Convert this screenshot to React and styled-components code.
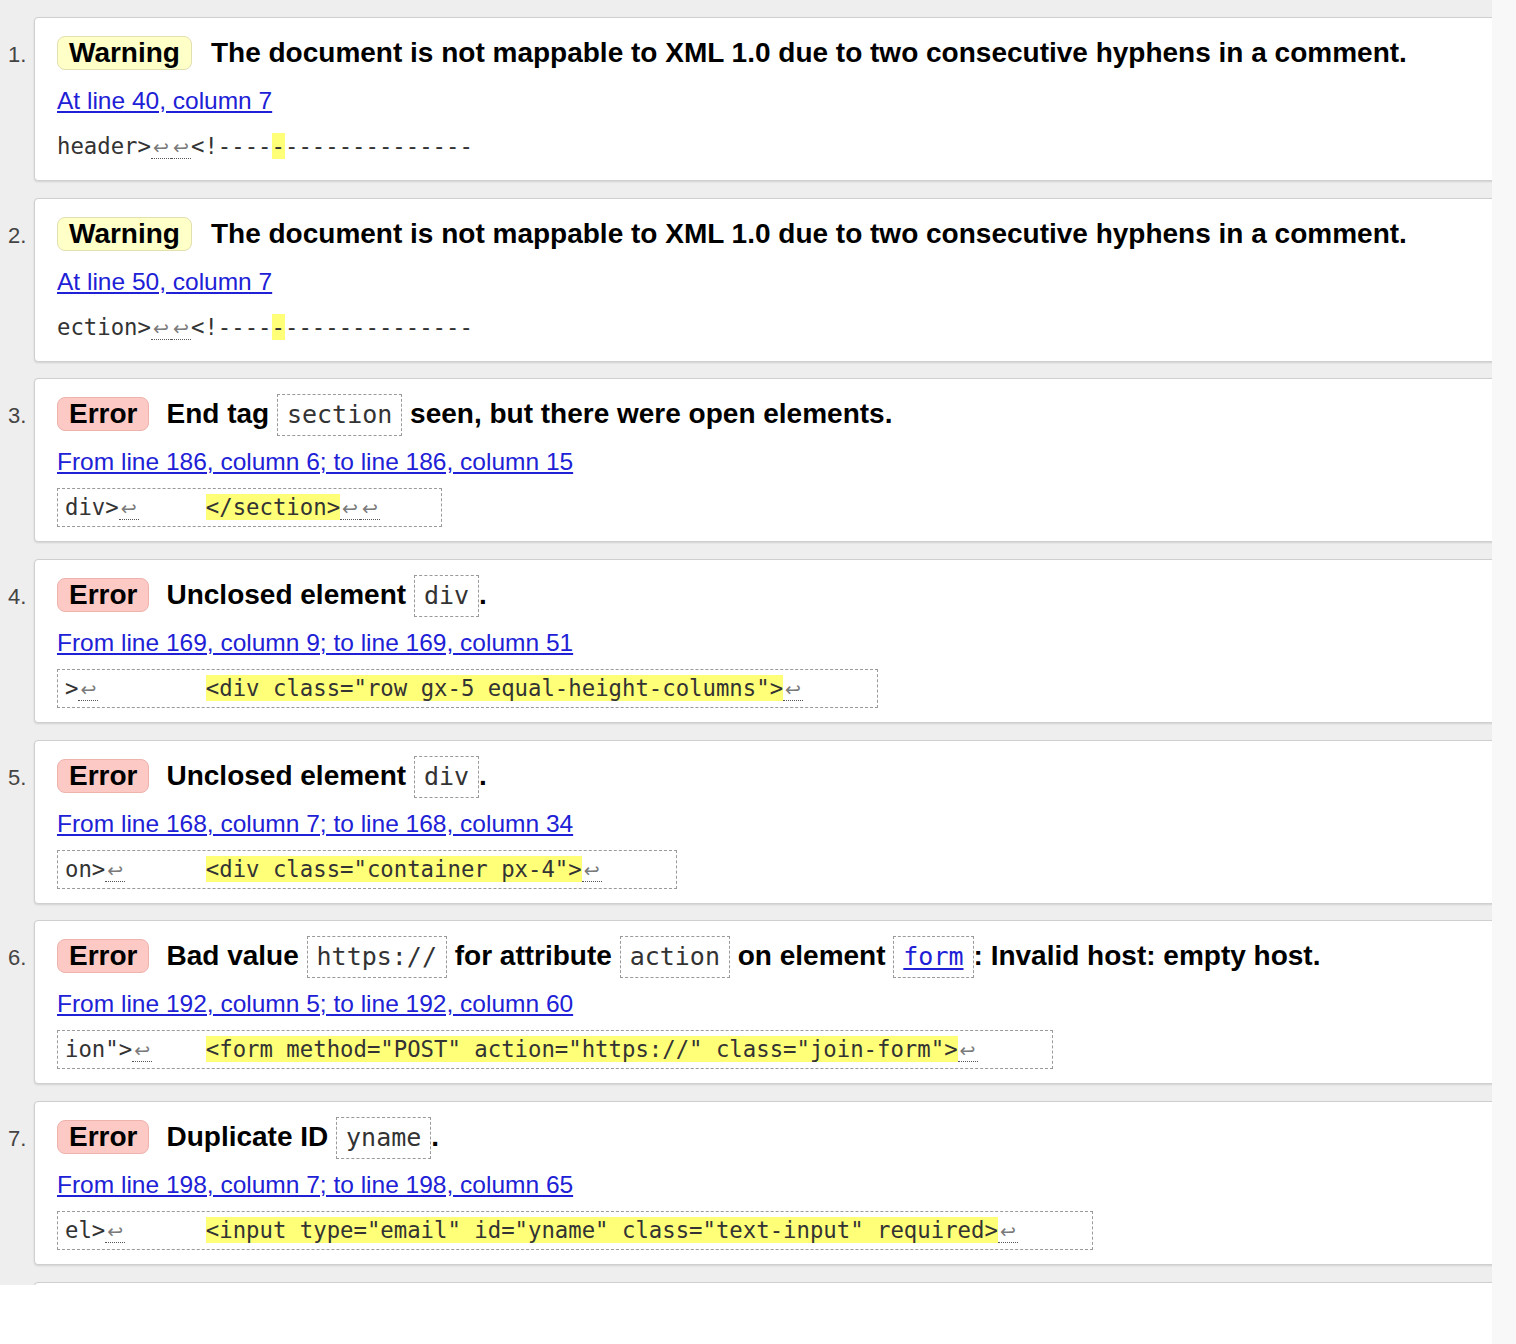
import React from "react";
import styled, { createGlobalStyle } from "styled-components";

const GlobalStyle = createGlobalStyle`
  html, body {
    margin: 0;
    padding: 0;
    background: #ffffff;
  }
  body {
    font-family: "Liberation Sans", Arial, sans-serif;
  }
`;

const MONO = `"DejaVu Sans Mono", "Liberation Mono", monospace`;
const LINK = "#2020d6";

const Page = styled.div`
  display: flex;
  width: 1516px;
  height: 1344px;
`;

const Viewport = styled.div`
  flex: none;
  width: 1492px;
  height: 1285px;
  overflow: hidden;
  background: #eeeeee;
`;

const Gutter = styled.div`
  flex: none;
  width: 24px;
  height: 1344px;
  background: #f8f8f8;
`;

const List = styled.ol`
  margin: 0;
  padding: 17px 0 0 8px;
  list-style: none;
  width: 1540px;
  display: flex;
  flex-direction: column;
  gap: 16.67px;
`;

const Item = styled.li`
  display: flex;
  align-items: baseline;
`;

const Num = styled.span`
  flex: none;
  width: 26px;
  font-size: 22px;
  color: #444;
`;

const Card = styled.div`
  flex: 1;
  box-sizing: border-box;
  height: 164px;
  padding: 14px 22px 14px;
  background: #ffffff;
  border: 1px solid #cfcfcf;
  border-radius: 4px;
  box-shadow: 0 1px 2px rgba(0, 0, 0, 0.12);
`;

const Title = styled.p`
  margin: 0;
  height: 42px;
  line-height: 42px;
  font-size: 28px;
  font-weight: bold;
  color: #000;
  white-space: nowrap;
`;

const Badge = styled.strong`
  display: inline-block;
  line-height: 32px;
  padding: 0 11px;
  margin-right: ${(p) => (p.$kind === "warning" ? "19px" : "17px")};
  border-radius: 8px;
  border: 1px solid
    ${(p) => (p.$kind === "warning" ? "#e2dfb0" : "#efb3ae")};
  background: ${(p) => (p.$kind === "warning" ? "#ffffc8" : "#fcc9c5")};
`;

const Code = styled.code`
  display: inline-block;
  line-height: 40px;
  padding: 0 9px;
  border: 1px dashed #9a9a9a;
  font-family: ${MONO};
  font-size: 25px;
  font-weight: normal;
  color: ${(p) => (p.$link ? LINK : "#333")};
  text-decoration: ${(p) => (p.$link ? "underline" : "none")};
  text-underline-offset: 3px;
`;

const Location = styled.p`
  margin: 12px 0 0;
  line-height: 29px;
  font-size: 24.5px;
`;

const Link = styled.a`
  color: ${LINK};
  text-decoration: underline;
  text-underline-offset: 2px;
`;

const Extract = styled.pre`
  display: block;
  width: fit-content;
  margin: 12px 0 0;
  padding: ${(p) => (p.$boxed ? "0 7px" : "0")};
  border: ${(p) => (p.$boxed ? "1px dashed #9a9a9a" : "none")};
  line-height: ${(p) => (p.$boxed ? "37px" : "39px")};
  font-family: ${MONO};
  font-size: 22.3px;
  color: #333;
  white-space: pre;
`;

const Mark = styled.mark`
  background: #ffff78;
  color: #333;
`;

const Lf = styled.span`
  display: inline-block;
  width: 20px;
  line-height: 22px;
  text-align: center;
  font-family: "DejaVu Sans", sans-serif;
  font-size: 19px;
  color: #7a7a7a;
  border-bottom: 1px dotted #555;
`;

const withBreaks = (s) =>
  s.split("↩").flatMap((part, i) =>
    i === 0 ? [part] : [<Lf key={i}>↩</Lf>, part]
  );

const messages = [
  {
    kind: "warning",
    title: (
      <>
        The document is not mappable to XML 1.0 due to two consecutive hyphens
        in a comment.
      </>
    ),
    loc: "At line 40, column 7",
    boxed: false,
    pre: "header>↩↩<!----",
    mark: "-",
    post: "--------------",
  },
  {
    kind: "warning",
    title: (
      <>
        The document is not mappable to XML 1.0 due to two consecutive hyphens
        in a comment.
      </>
    ),
    loc: "At line 50, column 7",
    boxed: false,
    pre: "ection>↩↩<!----",
    mark: "-",
    post: "--------------",
  },
  {
    kind: "error",
    title: (
      <>
        End tag <Code>section</Code> seen, but there were open elements.
      </>
    ),
    loc: "From line 186, column 6; to line 186, column 15",
    boxed: true,
    pre: "div>↩     ",
    mark: "</section>",
    post: "↩↩    ",
  },
  {
    kind: "error",
    title: (
      <>
        Unclosed element <Code>div</Code>.
      </>
    ),
    loc: "From line 169, column 9; to line 169, column 51",
    boxed: true,
    pre: ">↩        ",
    mark: '<div class="row gx-5 equal-height-columns">',
    post: "↩     ",
  },
  {
    kind: "error",
    title: (
      <>
        Unclosed element <Code>div</Code>.
      </>
    ),
    loc: "From line 168, column 7; to line 168, column 34",
    boxed: true,
    pre: "on>↩      ",
    mark: '<div class="container px-4">',
    post: "↩     ",
  },
  {
    kind: "error",
    title: (
      <>
        Bad value <Code>https://</Code> for attribute <Code>action</Code> on
        element{" "}
        <Code as="a" $link>
          form
        </Code>
        : Invalid host: empty host.
      </>
    ),
    loc: "From line 192, column 5; to line 192, column 60",
    boxed: true,
    pre: 'ion">↩    ',
    mark: '<form method="POST" action="https://" class="join-form">',
    post: "↩     ",
  },
  {
    kind: "error",
    title: (
      <>
        Duplicate ID <Code>yname</Code>.
      </>
    ),
    loc: "From line 198, column 7; to line 198, column 65",
    boxed: true,
    pre: "el>↩      ",
    mark: '<input type="email" id="yname" class="text-input" required>',
    post: "↩     ",
  },
];

export default function App() {
  return (
    <>
      <GlobalStyle />
      <Page>
        <Viewport>
          <List>
            {messages.map((m, i) => (
              <Item key={i}>
                <Num>{i + 1}.</Num>
                <Card>
                  <Title>
                    <Badge $kind={m.kind}>
                      {m.kind === "warning" ? "Warning" : "Error"}
                    </Badge>
                    {m.title}
                  </Title>
                  <Location>
                    <Link href="#">{m.loc}</Link>
                  </Location>
                  <Extract $boxed={m.boxed}>
                    {withBreaks(m.pre)}
                    <Mark>{m.mark}</Mark>
                    {withBreaks(m.post)}
                  </Extract>
                </Card>
              </Item>
            ))}
            <Item>
              <Num />
              <Card />
            </Item>
          </List>
        </Viewport>
        <Gutter />
      </Page>
    </>
  );
}
